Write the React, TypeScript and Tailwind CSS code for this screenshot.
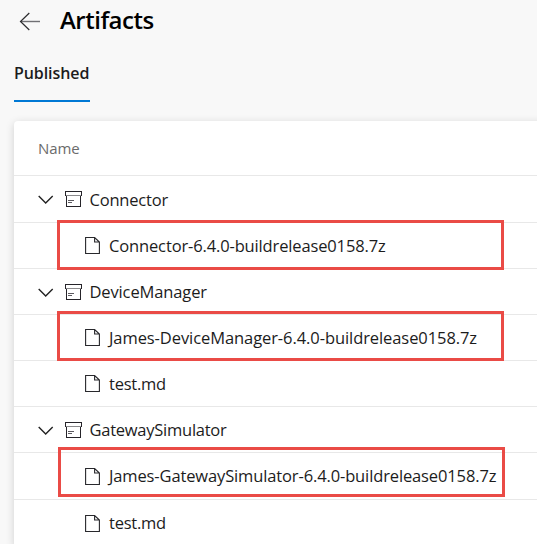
type Row = { kind: "folder" | "file"; label: string; height: string; text: string; mark?: string };

const rows: Row[] = [
  { kind: "folder", label: "Connector", height: "h-[47px]", text: "top-px tracking-[-0.2px]" },
  { kind: "file", label: "Connector-6.4.0-buildrelease0158.7z", height: "h-[46px]", text: "top-px tracking-[-0.14px]", mark: "left-[43px] -top-[3px]" },
  { kind: "folder", label: "DeviceManager", height: "h-[46px]", text: "top-px tracking-[-0.13px]" },
  { kind: "file", label: "James-DeviceManager-6.4.0-buildrelease0158.7z", height: "h-[46px]", text: "top-px tracking-[-0.08px]", mark: "left-[43px] -top-[4px]" },
  { kind: "file", label: "test.md", height: "h-[46px]", text: "top-px tracking-[-0.25px]" },
  { kind: "folder", label: "GatewaySimulator", height: "h-[46px]", text: "top-px tracking-[-0.25px]" },
  { kind: "file", label: "James-GatewaySimulator-6.4.0-buildrelease0158.7z", height: "h-[47px]", text: "tracking-[-0.13px]", mark: "left-[44px] -top-[6px]" },
  { kind: "file", label: "test.md", height: "h-[47px]", text: "tracking-[-0.25px]" },
];

function Chevron() {
  return (
    <svg className="relative top-[0.5px] h-[9px] w-[16px] shrink-0" viewBox="0 0 16 9" fill="none" stroke="#222" strokeWidth="1.4">
      <path d="M.7 1l7 7 7-7" />
    </svg>
  );
}

function ArchiveIcon() {
  return (
    <svg className="h-[16px] w-[17px] shrink-0" viewBox="0 0 17 16" fill="none" shapeRendering="crispEdges">
      <path d="M.5 .5h16v4H.5zM1.5 4.5v10.5h14v-10.5" stroke="#26242a" />
      <path d="M1 4.5h15" stroke="#8a8a8c" />
      <path d="M3 9.5h6M3 11.5h4" stroke="#5c5a60" />
    </svg>
  );
}

function FileIcon() {
  return (
    <svg className="h-[17px] w-[15px] shrink-0" viewBox="0 0 15 17" fill="none" stroke="#28282c" strokeWidth="1.1">
      <path d="M.6 .5h9l4.8 4.5v11.5H.6zM9.6 .5V5h4.8" />
    </svg>
  );
}

export default function App() {
  return (
    <div className="h-[544px] w-[537px] overflow-hidden bg-[#f8f8f8] pl-[14px] font-['Open_Sans','Noto_Sans',sans-serif] text-[#1c1c1c]">
      <header className="flex h-[42px] items-center pl-[5px]">
        <svg className="h-[20px] w-[22px] shrink-0" viewBox="0 0 22 20" fill="none" stroke="#2b2b2e" strokeWidth="1.2">
          <path d="M2 10.5h19" stroke="#707074" strokeWidth="1.4" />
          <path d="M10.3 2l-8.8 8.5 8.8 8.5" />
        </svg>
        <h1 className="ml-[19px] whitespace-nowrap pb-[2px] text-[24px] font-semibold leading-[40px] tracking-[-0.5px] text-black">Artifacts</h1>
      </header>
      <nav className="flex h-[60px]">
        <span className="w-[76px] whitespace-nowrap border-b-2 border-[#0078d4] pt-[19px] text-[16px] font-semibold leading-[24px] tracking-[-0.08px]">Published</span>
      </nav>
      <main className="mt-[19px] w-[560px] rounded-[4px] bg-white shadow-[0_2px_8px_rgba(0,0,0,0.16)]">
        <div className="flex h-[55px] items-center border-b border-[#e8e8e8] pl-[24px] text-[15px] tracking-[-0.1px] text-[#6b6b6b]">Name</div>
        {rows.map((row, i) => (
          <div key={i} className={`relative flex items-center border-b border-[#e8e8e8] text-[16.5px] ${row.height} ${row.kind === "folder" ? "pl-[24px]" : "pl-[71px]"}`}>
            {row.kind === "folder" ? (
              <>
                <Chevron />
                <span className="ml-[11px]"><ArchiveIcon /></span>
              </>
            ) : (
              <FileIcon />
            )}
            <span className={`relative whitespace-nowrap ${row.kind === "folder" ? "ml-[7.5px]" : "ml-[9px]"} ${row.text}`}>{row.label}</span>
            {row.mark && <span className={`pointer-events-none absolute z-10 h-[50px] w-[447px] border-[3px] border-[#ea4b46] ${row.mark}`} />}
          </div>
        ))}
      </main>
    </div>
  );
}
